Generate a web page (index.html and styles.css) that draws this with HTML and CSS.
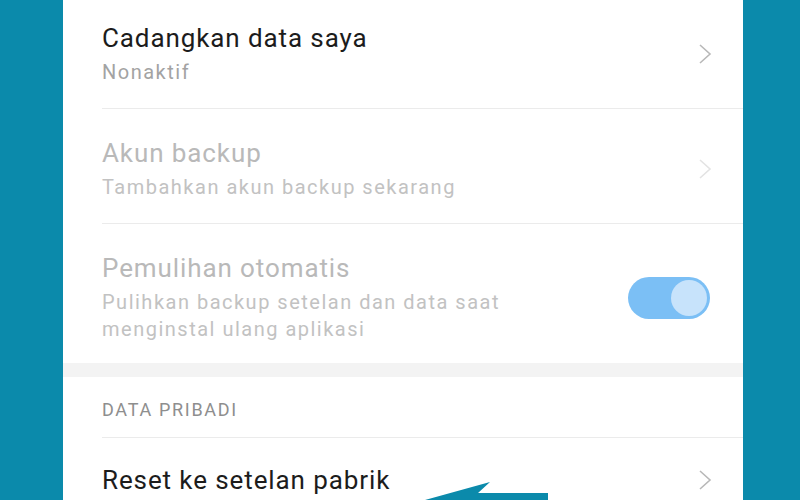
FILE: index.html
```html
<!DOCTYPE html>
<html lang="en">
<head>
    <meta charset="UTF-8">
    <meta name="viewport" content="width=device-width, initial-scale=1.0">
    <title>Cadangkan &amp; reset</title>
    <link rel="stylesheet" href="styles.css">
</head>
<body>
    <div class="screen">
        <div class="settings">
            <div class="row first">
                <div class="text">
                    <div class="title">Cadangkan data saya</div>
                    <div class="sub">Nonaktif</div>
                </div>
                <svg class="chevron" viewBox="0 0 14 22"><polyline points="2,2 12,11 2,20"/></svg>
            </div>

            <div class="row disabled">
                <div class="text">
                    <div class="title">Akun backup</div>
                    <div class="sub">Tambahkan akun backup sekarang</div>
                </div>
                <svg class="chevron" viewBox="0 0 14 22"><polyline points="2,2 12,11 2,20"/></svg>
            </div>

            <div class="row disabled last-in-group">
                <div class="text">
                    <div class="title">Pemulihan otomatis</div>
                    <div class="sub">Pulihkan backup setelan dan data saat<br>menginstal ulang aplikasi</div>
                </div>
                <div class="toggle"><span class="thumb"></span></div>
            </div>

            <div class="gap-band"></div>

            <div class="section-head">DATA PRIBADI</div>

            <div class="row reset">
                <div class="text">
                    <div class="title">Reset ke setelan pabrik</div>
                </div>
                <svg class="chevron" viewBox="0 0 14 22"><polyline points="2,2 12,11 2,20"/></svg>
            </div>
        </div>

        <!-- pointer arrow drawn over the screenshot -->
        <svg class="arrow" viewBox="0 0 160 40"><polygon points="25,30 90,12 78,23 148,23 148,40 25,40"/></svg>
    </div>
</body>
</html>
```

FILE: styles.css
```css
body {
    margin: 0;
    background: #0b8aab;
    font-family: Roboto, "Noto Sans", sans-serif;
    overflow: hidden;
}

.screen {
    position: relative;
    height: 500px;
    padding-left: 63px;
}

.settings {
    width: 680px;
    height: 500px;
    background-color: #ffffff;
    overflow: hidden;
}

.row {
    display: flex;
    align-items: center;
    margin-left: 39px;
    padding: 28px 31px 22px 0;
    border-bottom: 1px solid #ebebeb;
}

.row.first {
    padding-top: 22px;
}

.row.last-in-group {
    border-bottom: none;
    padding-bottom: 20px;
}

.row.reset {
    border-bottom: none;
    padding-top: 26px;
}

.text {
    flex: 1;
}

.title {
    font-size: 26px;
    line-height: 32px;
    letter-spacing: 0.9px;
    color: #1c1c1c;
}

.sub {
    margin-top: 5px;
    font-size: 20px;
    line-height: 27px;
    letter-spacing: 1.5px;
    color: #a3a3a3;
}

.disabled .title {
    color: #b9b9b9;
}

.disabled .sub {
    color: #c2c2c2;
}

.chevron {
    width: 14px;
    height: 22px;
    fill: none;
    stroke: #b8b8b8;
    stroke-width: 1.6;
}

.disabled .chevron {
    stroke: #e3e3e3;
}

.toggle {
    width: 82px;
    height: 42px;
    margin-right: 2px;
    border-radius: 21px;
    background-color: #7bbff5;
    display: flex;
    align-items: center;
    justify-content: flex-end;
    padding-right: 3px;
    box-sizing: border-box;
}

.thumb {
    width: 36px;
    height: 36px;
    border-radius: 50%;
    background-color: #c7e3fb;
}

.gap-band {
    height: 14px;
    background-color: #f3f3f3;
}

.section-head {
    margin-left: 39px;
    padding: 22px 0 16px;
    font-size: 18px;
    line-height: 22px;
    letter-spacing: 1.7px;
    color: #8e8e8e;
    border-bottom: 1px solid #ebebeb;
}

.arrow {
    position: absolute;
    left: 400px;
    top: 470px;
    width: 160px;
    height: 40px;
    fill: #0b8aab;
}
```
